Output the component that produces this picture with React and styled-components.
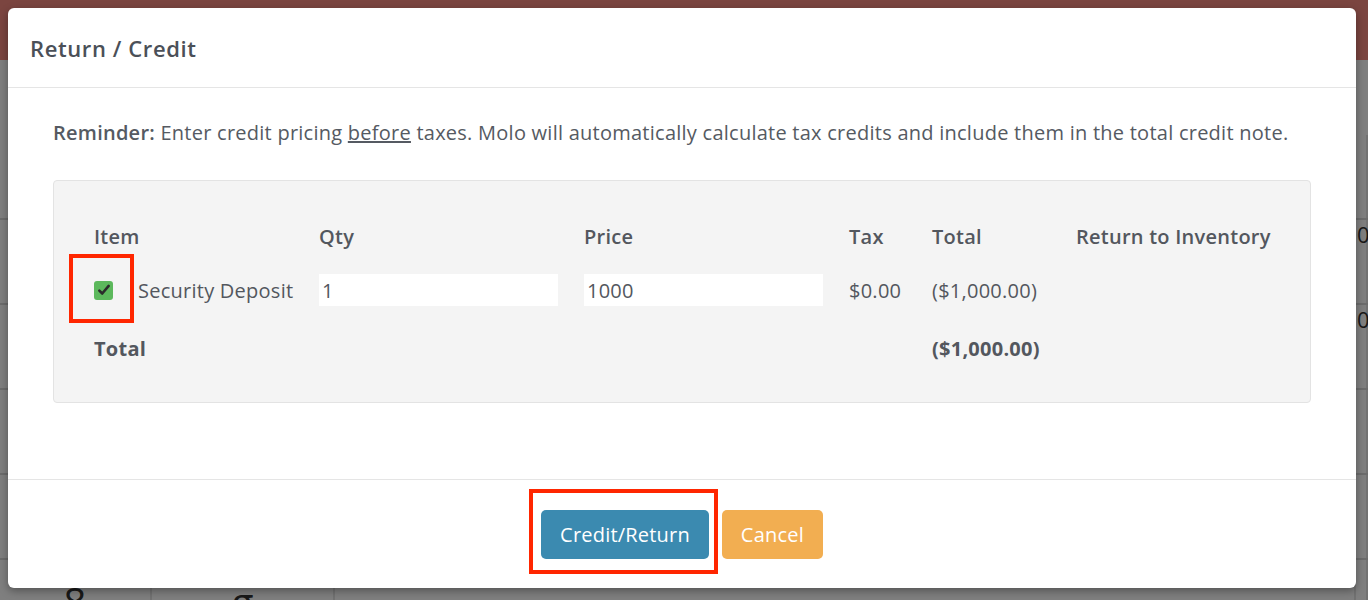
import React from 'react'
import styled, { createGlobalStyle } from 'styled-components'

const GlobalStyle = createGlobalStyle`
    html, body {
        margin: 0;
        padding: 0;
        width: 100%;
        height: 100%;
        overflow: hidden;
        font-family: 'Open Sans', 'Liberation Sans', sans-serif;
    }
`

const rows = [
    { id: 'item-1', name: 'Security Deposit', qty: '1', price: '1000', tax: '$0.00', total: '($1,000.00)' },
]

const App = () => {
    return (
        <Page>
            <GlobalStyle />
            <TopBar />
            <BackTable>
                {['a', 'b', 'c', 'd', 'e', 'f'].map((key, i) => (
                    <BackRow key={key}>
                        <BackCell $big>{i === 5 ? '8' : ''}</BackCell>
                        <BackCell $big>{i === 5 ? 'g' : ''}</BackCell>
                        <BackCell />
                        <BackCell $edge>{i === 1 || i === 2 ? '0' : ''}</BackCell>
                    </BackRow>
                ))}
            </BackTable>
            <Overlay>
                <Modal>
                    <Header>
                        <Title>Return / Credit</Title>
                    </Header>
                    <Body>
                        <Reminder>
                            <strong>Reminder:</strong> Enter credit pricing <u>before</u> taxes. Molo will
                            automatically calculate tax credits and include them in the total credit note.
                        </Reminder>
                        <Panel>
                            <Grid>
                                <HeadCell>Item</HeadCell>
                                <HeadCell>Qty</HeadCell>
                                <HeadCell>Price</HeadCell>
                                <HeadCell>Tax</HeadCell>
                                <HeadCell>Total</HeadCell>
                                <HeadCell>Return to Inventory</HeadCell>

                                {rows.map((row) => (
                                    <React.Fragment key={row.id}>
                                        <ItemCell>
                                            <Marked>
                                                <Checkbox>
                                                    <svg width="14" height="14" viewBox="0 0 24 24" fill="none" stroke="#2b2b2b" strokeWidth="4.5" strokeLinecap="round" strokeLinejoin="round">
                                                        <path d="M4 13l5 5L20 5" />
                                                    </svg>
                                                </Checkbox>
                                            </Marked>
                                            {row.name}
                                        </ItemCell>
                                        <Cell><Input defaultValue={row.qty} /></Cell>
                                        <Cell><Input defaultValue={row.price} /></Cell>
                                        <Cell>{row.tax}</Cell>
                                        <Cell>{row.total}</Cell>
                                        <Cell />
                                    </React.Fragment>
                                ))}

                                <TotalCell>Total</TotalCell>
                                <Cell />
                                <Cell />
                                <Cell />
                                <TotalCell>($1,000.00)</TotalCell>
                                <Cell />
                            </Grid>
                        </Panel>
                    </Body>
                    <Footer>
                        <Marked $wide>
                            <Button $variant="primary">Credit/Return</Button>
                        </Marked>
                        <Button $variant="warning">Cancel</Button>
                    </Footer>
                </Modal>
            </Overlay>
        </Page>
    )
}

export default App

const Page = styled.div`
    position: relative;
    width: 1368px;
    height: 600px;
    background: #ffffff;
    overflow: hidden;
`

const TopBar = styled.div`
    height: 60px;
    background: #f68a80;
`

const BackTable = styled.div`
    display: flex;
    flex-direction: column;
    padding-top: 75px;
`

const BackRow = styled.div`
    display: grid;
    grid-template-columns: 152px 183px 1021px 12px;
    height: 83px;
    border-bottom: 2px solid #d8d8d8;
`

const BackCell = styled.div`
    border-right: 2px solid #e4e4e4;
    font-size: ${(p) => (p.$big ? '40px' : '22px')};
    color: #333;
    display: flex;
    align-items: flex-start;
    justify-content: ${(p) => (p.$edge ? 'flex-start' : 'center')};
    line-height: 1;
    padding-top: ${(p) => (p.$big ? '22px' : '3px')};
    padding-left: ${(p) => (p.$edge ? '1px' : '0')};
`

const Overlay = styled.div`
    position: absolute;
    inset: 0;
    background: rgba(0, 0, 0, 0.5);
    padding: 8px 12px 12px 8px;
    box-sizing: border-box;
`

const Modal = styled.div`
    background: #fff;
    border-radius: 6px;
    height: 580px;
    display: flex;
    flex-direction: column;
    box-shadow: 0 3px 8px rgba(0, 0, 0, 0.35);
    color: #53575e;
    letter-spacing: 0.25px;
`

const Header = styled.div`
    height: 79px;
    border-bottom: 1px solid #e5e5e5;
    display: flex;
    align-items: center;
    padding: 0 22px;
`

const Title = styled.h4`
    margin: 0;
    font-size: 22px;
    font-weight: 600;
    color: #4b5058;
    letter-spacing: 0.6px;
`

const Body = styled.div`
    flex: 1;
    padding: 32px 45px 0 45px;
`

const Reminder = styled.p`
    margin: 0 0 34px 0;
    font-size: 20px;
    line-height: 26px;
    color: #555a62;
    white-space: nowrap;
    strong {
        font-weight: 600;
    }
`

const Panel = styled.div`
    background: #f4f4f4;
    border: 1px solid #e3e3e3;
    border-radius: 4px;
    height: 223px;
    box-sizing: border-box;
    padding: 41px 40px 0 40px;
`

const Grid = styled.div`
    display: grid;
    grid-template-columns: 225px 265px 265px 83px 144px 1fr;
    grid-template-rows: 28px 80px 36px;
    font-size: 20px;
    color: #53575e;
    white-space: nowrap;
`

const Cell = styled.div`
    display: flex;
    align-items: center;
`

const HeadCell = styled(Cell)`
    font-weight: 600;
`

const ItemCell = styled(Cell)`
    gap: 25px;
`

const TotalCell = styled(Cell)`
    font-weight: 700;
`

const Marked = styled.div`
    position: relative;
    display: flex;
    &::after {
        content: '';
        position: absolute;
        left: ${(p) => (p.$wide ? '-12px' : '-25px')};
        right: ${(p) => (p.$wide ? '-9px' : '-21px')};
        top: ${(p) => (p.$wide ? '-21px' : '-27px')};
        bottom: ${(p) => (p.$wide ? '-15px' : '-23px')};
        border: 4px solid #ff2600;
        pointer-events: none;
    }
`

const Checkbox = styled.span`
    width: 19px;
    height: 19px;
    border-radius: 3px;
    background: #5cb85c;
    display: flex;
    align-items: center;
    justify-content: center;
`

const Input = styled.input`
    width: 239px;
    height: 32px;
    box-sizing: border-box;
    border: none;
    background: #fff;
    padding: 0 3px;
    font-family: inherit;
    font-size: 20px;
    letter-spacing: 0.25px;
    color: #53575e;
    outline: none;
`

const Footer = styled.div`
    height: 108px;
    border-top: 1px solid #e5e5e5;
    display: flex;
    align-items: center;
    justify-content: center;
    gap: 13px;
`

const Button = styled.button`
    height: 49px;
    border: none;
    border-radius: 5px;
    padding: 0 19px;
    font-family: inherit;
    font-size: 20px;
    letter-spacing: 0.2px;
    color: #fff;
    cursor: pointer;
    background: ${(p) => (p.$variant === 'primary' ? '#3b8ab0' : '#f2ae51')};
`
